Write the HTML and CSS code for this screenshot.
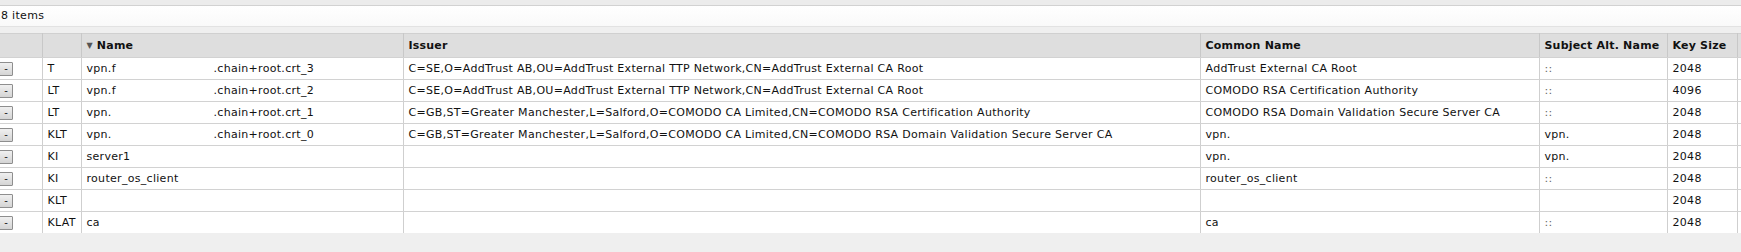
FILE: index.html
```html
<!DOCTYPE html>
<html lang="en">
<head>
  <meta charset="UTF-8" />
  <title>Certificates</title>
  <link rel="stylesheet" href="styles.css">
</head>
<body>
  <div class="topband"></div>
  <div class="status">8 items</div>
  <div class="gap"></div>

  <table class="grid">
    <colgroup>
      <col class="c-btn"><col class="c-flags"><col class="c-name"><col class="c-issuer">
      <col class="c-cn"><col class="c-san"><col class="c-key"><col class="c-extra">
    </colgroup>
    <thead>
      <tr>
        <th></th>
        <th></th>
        <th><span class="sort">&#9660;</span>Name</th>
        <th>Issuer</th>
        <th>Common Name</th>
        <th>Subject Alt. Name</th>
        <th>Key Size</th>
        <th></th>
      </tr>
    </thead>
    <tbody>
      <tr>
        <td><button class="rm">-</button></td>
        <td>T</td>
        <td><span class="hid">vpn.f</span>.chain+root.crt_3</td>
        <td>C=SE,O=AddTrust AB,OU=AddTrust External TTP Network,CN=AddTrust External CA Root</td>
        <td>AddTrust External CA Root</td>
        <td class="dim">::</td>
        <td>2048</td>
        <td></td>
      </tr>
      <tr>
        <td><button class="rm">-</button></td>
        <td>LT</td>
        <td><span class="hid">vpn.f</span>.chain+root.crt_2</td>
        <td>C=SE,O=AddTrust AB,OU=AddTrust External TTP Network,CN=AddTrust External CA Root</td>
        <td>COMODO RSA Certification Authority</td>
        <td class="dim">::</td>
        <td>4096</td>
        <td></td>
      </tr>
      <tr>
        <td><button class="rm">-</button></td>
        <td>LT</td>
        <td><span class="hid">vpn.</span>.chain+root.crt_1</td>
        <td>C=GB,ST=Greater Manchester,L=Salford,O=COMODO CA Limited,CN=COMODO RSA Certification Authority</td>
        <td>COMODO RSA Domain Validation Secure Server CA</td>
        <td class="dim">::</td>
        <td>2048</td>
        <td></td>
      </tr>
      <tr>
        <td><button class="rm">-</button></td>
        <td>KLT</td>
        <td><span class="hid">vpn.</span>.chain+root.crt_0</td>
        <td>C=GB,ST=Greater Manchester,L=Salford,O=COMODO CA Limited,CN=COMODO RSA Domain Validation Secure Server CA</td>
        <td>vpn.</td>
        <td>vpn.</td>
        <td>2048</td>
        <td></td>
      </tr>
      <tr>
        <td><button class="rm">-</button></td>
        <td>KI</td>
        <td>server1</td>
        <td></td>
        <td>vpn.</td>
        <td>vpn.</td>
        <td>2048</td>
        <td></td>
      </tr>
      <tr>
        <td><button class="rm">-</button></td>
        <td>KI</td>
        <td>router_os_client</td>
        <td></td>
        <td>router_os_client</td>
        <td class="dim">::</td>
        <td>2048</td>
        <td></td>
      </tr>
      <tr>
        <td><button class="rm">-</button></td>
        <td>KLT</td>
        <td></td>
        <td></td>
        <td></td>
        <td></td>
        <td>2048</td>
        <td></td>
      </tr>
      <tr>
        <td><button class="rm">-</button></td>
        <td>KLAT</td>
        <td>ca</td>
        <td></td>
        <td>ca</td>
        <td class="dim">::</td>
        <td>2048</td>
        <td></td>
      </tr>
    </tbody>
  </table>
</body>
</html>
```

FILE: styles.css
```css
body {
  margin: 0;
  background: #efefef;
  font-family: "DejaVu Sans", Verdana, sans-serif;
  font-size: 11px;
  letter-spacing: 0.3px;
  color: #111;
  overflow: hidden;
}

.topband {
  height: 5px;
  background: #ececec;
  border-bottom: 1px solid #d2d2d2;
}

.status {
  height: 20px;
  line-height: 20px;
  padding-left: 1px;
  background: linear-gradient(#ffffff, #f9f9f9);
  border-bottom: 1px solid #e2e2e2;
}

.gap {
  height: 6px;
}

.grid {
  border-collapse: collapse;
  table-layout: fixed;
  width: 1747px;
  background: #fff;
  border-top: 1px solid #d0d0d0;
  box-shadow: 0 2px 2px rgba(0,0,0,0.18);
}

.c-btn { width: 42px; }
.c-flags { width: 39px; }
.c-name { width: 322px; }
.c-issuer { width: 797px; }
.c-cn { width: 339px; }
.c-san { width: 128px; }
.c-key { width: 70px; }
.c-extra { width: 10px; }

.grid th, .grid td {
  border-right: 1px solid #cfcfcf;
  border-bottom: 1px solid #d2d2d2;
  padding: 0 5px;
  white-space: nowrap;
  overflow: hidden;
  text-align: left;
}

.grid th {
  height: 23px;
  background: #dedede;
  font-weight: bold;
  letter-spacing: 0.2px;
  color: #111;
  border-right-color: #c8c8c8;
}

.grid td {
  height: 21px;
}

.grid tbody tr:last-child td {
  border-bottom: none;
}

.grid td:first-child {
  padding: 0;
}

.sort {
  font-size: 8px;
  color: #555;
  margin-right: 4px;
  vertical-align: 1px;
}

.hid {
  display: inline-block;
  width: 127px;
}

.dim {
  color: #666;
}

.rm {
  display: block;
  width: 14px;
  height: 14px;
  margin-left: -1px;
  padding: 0;
  font-family: "DejaVu Sans", Verdana, sans-serif;
  font-size: 10px;
  line-height: 10px;
  color: #222;
  background: linear-gradient(#f0f0f0, #d4d4d4);
  border: 1px solid #8e8e8e;
  border-radius: 1px;
}
```
